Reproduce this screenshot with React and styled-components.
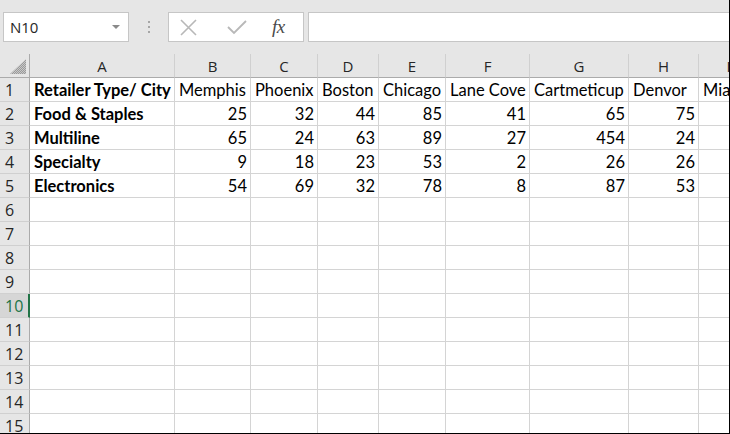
import React from "react";
import styled, { createGlobalStyle } from "styled-components";

const Global = createGlobalStyle`
  html, body { margin: 0; padding: 0; background: #fff; }
  * { box-sizing: border-box; }
`;

const Frame = styled.div`
  width: 730px;
  height: 434px;
  overflow: hidden;
  border-right: 1px solid #000;
  border-bottom: 1px solid #000;
  background: #fff;
  font-family: "Open Sans", "Noto Sans", sans-serif;
`;

const Toolbar = styled.div`
  height: 54px;
  background: #e6e6e6;
  display: flex;
  align-items: flex-start;
  padding: 12px 0 0 3px;
`;

const NameBox = styled.div`
  width: 126px;
  height: 30px;
  background: #fff;
  border: 1px solid #c6c6c6;
  display: flex;
  align-items: center;
  justify-content: space-between;
  padding: 0 8px 0 6px;
  font-size: 15px;
  color: #262626;
`;

const Caret = styled.span`
  width: 0;
  height: 0;
  border-left: 4px solid transparent;
  border-right: 4px solid transparent;
  border-top: 4px solid #8a8a8a;
`;

const Grip = styled.div`
  width: 39px;
  height: 30px;
  display: flex;
  flex-direction: column;
  align-items: center;
  justify-content: center;
  gap: 3px;
`;

const Dot = styled.span`
  width: 2px;
  height: 2px;
  background: #a6a6a6;
`;

const FxButtons = styled.div`
  width: 136px;
  height: 30px;
  background: #fff;
  border: 1px solid #c6c6c6;
  display: flex;
  align-items: center;
  padding-left: 10px;
`;

const IconSlot = styled.div`
  width: ${(p) => p.$w}px;
  height: 28px;
  display: flex;
  align-items: center;
`;

const FxText = styled.span`
  font-family: "Liberation Serif", "DejaVu Serif", serif;
  font-style: italic;
  font-size: 19px;
  color: #4a4a4a;
  letter-spacing: -0.5px;
`;

const FormulaInput = styled.div`
  flex: 1;
  height: 30px;
  margin-left: 4px;
  background: #fff;
  border: 1px solid #c6c6c6;
  border-right: none;
`;

const Grid = styled.div`
  display: grid;
  grid-template-columns: 30px 145px 76px 67px 61px 67px 84px 99px 70px 60px;
  grid-auto-rows: 24px;
`;

const ColHead = styled.div`
  background: #e6e6e6;
  border-right: 1px solid #d0d0d0;
  border-bottom: 1px solid #ababab;
  display: flex;
  align-items: center;
  justify-content: center;
  font-size: 15px;
  color: #262626;
  padding-top: 1px;
  white-space: nowrap;
  overflow: hidden;
`;

const Corner = styled(ColHead)`
  border-right: 1px solid #ababab;
  justify-content: flex-end;
  align-items: flex-end;
  padding: 0 3px 3px 0;
`;

const RowHead = styled.div`
  background: ${(p) => (p.$active ? "#d6d6d6" : "#e6e6e6")};
  border-right: ${(p) => (p.$active ? "2px solid #217346" : "1px solid #ababab")};
  border-bottom: 1px solid #d0d0d0;
  display: flex;
  align-items: center;
  padding-left: 5px;
  font-size: 16px;
  color: ${(p) => (p.$active ? "#217346" : "#262626")};
  padding-top: 1px;
`;

const Cell = styled.div`
  border-right: 1px solid #d4d4d4;
  border-bottom: 1px solid #d4d4d4;
  display: flex;
  align-items: center;
  justify-content: ${(p) => (p.$num ? "flex-end" : "flex-start")};
  padding: 1px 3px 0 4px;
  font-family: "Lato", "Open Sans", sans-serif;
  font-size: 16.5px;
  font-weight: ${(p) => (p.$bold ? 700 : 400)};
  color: #000;
  white-space: nowrap;
  overflow: ${(p) => (p.$clip ? "hidden" : "visible")};
`;

const cols = ["A", "B", "C", "D", "E", "F", "G", "H", "I"];
const header = ["Retailer Type/ City", "Memphis", "Phoenix", "Boston", "Chicago", "Lane Cove", "Cartmeticup", "Denvor", "Miami"];
const data = [
  ["Food & Staples", 25, 32, 44, 85, 41, 65, 75],
  ["Multiline", 65, 24, 63, 89, 27, 454, 24],
  ["Specialty", 9, 18, 23, 53, 2, 26, 26],
  ["Electronics", 54, 69, 32, 78, 8, 87, 53],
];

export default function App() {
  const rows = [];
  for (let r = 1; r <= 15; r++) {
    rows.push(
      <RowHead key={`h${r}`} $active={r === 10}>
        {r}
      </RowHead>
    );
    cols.forEach((c, ci) => {
      let content = "";
      let num = false;
      let bold = false;
      if (r === 1) {
        content = header[ci];
        bold = ci === 0;
      } else if (r <= 5) {
        const v = data[r - 2][ci];
        if (v !== undefined) {
          content = v;
          num = ci > 0;
          bold = ci === 0;
        }
      }
      rows.push(
        <Cell key={`${c}${r}`} $num={num} $bold={bold} $clip={ci === 8}>
          {content}
        </Cell>
      );
    });
  }

  return (
    <>
      <Global />
      <Frame>
        <Toolbar>
          <NameBox>
            <span>N10</span>
            <Caret />
          </NameBox>
          <Grip>
            <Dot />
            <Dot />
            <Dot />
          </Grip>
          <FxButtons>
            <IconSlot $w={48}>
              <svg width="19" height="19" viewBox="0 0 19 19">
                <path d="M2 2 L17 17 M17 2 L2 17" stroke="#b8b8b8" strokeWidth="1.6" fill="none" />
              </svg>
            </IconSlot>
            <IconSlot $w={45}>
              <svg width="20" height="16" viewBox="0 0 20 16">
                <path d="M1 8 L7 14 L19 2" stroke="#b8b8b8" strokeWidth="1.8" fill="none" />
              </svg>
            </IconSlot>
            <IconSlot $w={30}>
              <FxText>fx</FxText>
            </IconSlot>
          </FxButtons>
          <FormulaInput />
        </Toolbar>
        <Grid>
          <Corner>
            <svg width="16" height="15" viewBox="0 0 16 15">
              <defs>
                <pattern id="dots" width="2" height="2" patternUnits="userSpaceOnUse">
                  <rect width="2" height="2" fill="#c8c8c8" />
                  <rect width="1" height="1" fill="#9a9a9a" />
                  <rect x="1" y="1" width="1" height="1" fill="#9a9a9a" />
                </pattern>
              </defs>
              <polygon points="16,0 16,15 0,15" fill="url(#dots)" />
            </svg>
          </Corner>
          {cols.map((c) => (
            <ColHead key={c}>{c}</ColHead>
          ))}
          {rows}
        </Grid>
      </Frame>
    </>
  );
}
